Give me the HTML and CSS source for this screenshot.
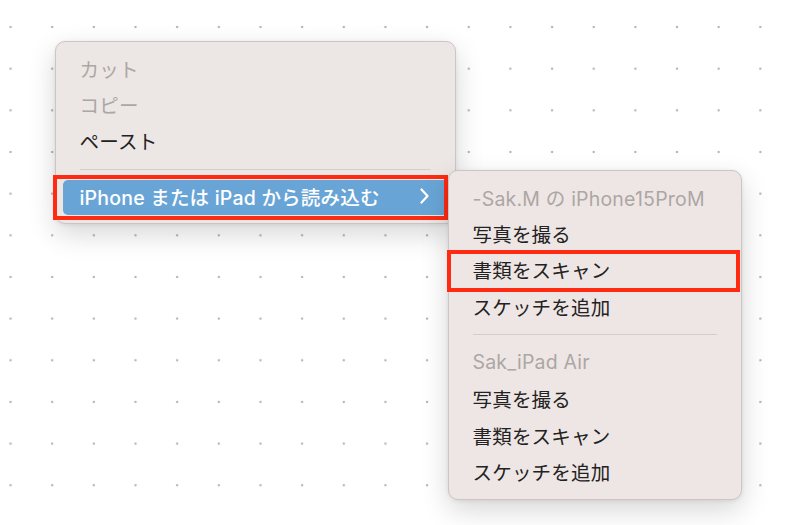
FILE: index.html
```html
<!DOCTYPE html>
<html lang="ja">
<head>
  <meta charset="UTF-8" />
  <title>読み込みメニュー</title>
  <link rel="stylesheet" href="styles.css">
</head>
<body>

<div class="canvas">

  <div class="menu menu-main">
    <div class="item disabled">カット</div>
    <div class="item disabled">コピー</div>
    <div class="item">ペースト</div>
    <div class="sep"></div>
    <div class="item active marked">
      <span>iPhone または iPad から読み込む</span>
      <svg class="chevron" width="9" height="16" viewBox="0 0 9 16">
        <polyline points="1.5,1.5 7.5,8 1.5,14.5" fill="none" stroke="#fff" stroke-width="2.2" stroke-linecap="round" stroke-linejoin="round"/>
      </svg>
    </div>
  </div>

  <div class="menu menu-sub">
    <div class="item disabled">-Sak.M の iPhone15ProM</div>
    <div class="item">写真を撮る</div>
    <div class="item marked-sub">書類をスキャン</div>
    <div class="item">スケッチを追加</div>
    <div class="sep"></div>
    <div class="item disabled">Sak_iPad Air</div>
    <div class="item">写真を撮る</div>
    <div class="item">書類をスキャン</div>
    <div class="item">スケッチを追加</div>
  </div>

</div>

</body>
</html>
```

FILE: styles.css
```css
* {
  box-sizing: border-box;
}
body {
  margin: 0;
  background-color: #fff;
  background-image: radial-gradient(circle, #b5b5b5 1.2px, transparent 1.6px);
  background-size: 41.667px 41.667px;
  background-position: -10.3px 6.2px;
  font-family: Inter, "Noto Sans CJK JP", sans-serif;
  font-size: 19.5px;
  color: #222;
}
.canvas {
  position: relative;
  width: 800px;
  height: 525px;
  overflow: hidden;
}
.menu {
  position: absolute;
  background: #ece7e4;
  border: 1px solid #cbc6c3;
  border-radius: 10px;
  padding: 9px 7px 8px;
  box-shadow: 0 10px 28px rgba(0,0,0,0.16), 0 1px 4px rgba(0,0,0,0.08);
}
.menu-main {
  left: 55px;
  top: 41px;
  width: 401px;
  z-index: 1;
}
.menu-sub {
  left: 448px;
  top: 170px;
  width: 294px;
  background: #eee6e4;
  z-index: 2;
}
.item {
  position: relative;
  height: 36.4px;
  padding: 0 19px 2px 16.5px;
  display: flex;
  align-items: center;
  justify-content: space-between;
  white-space: nowrap;
  letter-spacing: 0.2px;
}
.disabled {
  color: #aca6a4;
}
.sep {
  height: 1px;
  background: #d3cecb;
  margin: 8.5px 17px 10px;
}
.active {
  height: 35.5px;
  background: #68a5d6;
  color: #fff;
  border-radius: 5px;
  font-weight: 500;
}
.chevron {
  display: block;
}
.marked::after,
.marked-sub::after {
  content: "";
  position: absolute;
  border: 4px solid #ff2a12;
  pointer-events: none;
}
.marked::after {
  top: -5px;
  bottom: -4.5px;
  left: -10px;
  right: 0;
}
.marked-sub::after {
  top: -3px;
  bottom: -3px;
  left: -9px;
  right: -6px;
}
```
